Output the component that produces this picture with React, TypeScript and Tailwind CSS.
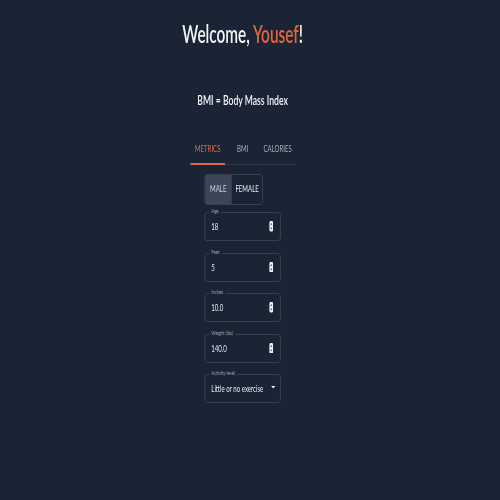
import React from "react";

const tabs = ["METRICS", "BMI", "CALORIES"];

function Spinner() {
  return (
    <svg viewBox="0 0 6 10" preserveAspectRatio="none" className="w-[6.4px] h-[10.5px] shrink-0">
      <rect x="0" y="0" width="6" height="10" rx="2" fill="#f1f1f1" />
      <path d="M1.6 3.6 L3 1.9 L4.4 3.6 Z" fill="#3a3a3a" />
      <path d="M1.6 6.4 L3 8.1 L4.4 6.4 Z" fill="#3a3a3a" />
    </svg>
  );
}

function Caret() {
  return (
    <svg viewBox="0 0 6 3" preserveAspectRatio="none" className="w-[6.2px] h-[2.6px] shrink-0 -mt-[2px]">
      <path d="M0 0 L6 0 L3 3 Z" fill="#f1f1f1" />
    </svg>
  );
}

function Field({ label, value, select }: { label: string; value: string; select?: boolean }) {
  return (
    <div
      className={
        select
          ? "relative h-[29px] w-full rounded-[4px] border-y border-x-[1.5px] border-[#3a4556] flex items-center pl-[9.4px] pr-[8px]"
          : "relative h-[29px] w-full rounded-[4px] border-y border-x-[1.5px] border-[#3a4556] flex items-center pl-[9.4px] pr-[10.5px]"
      }
    >
      <span className="absolute -top-[6px] left-[6px] px-[3.5px] bg-[#1a2435] text-[6.5px] leading-[8px] text-[#9aa4b1]">
        {label}
      </span>
      <span className="flex-1 pt-[2px] text-[9.5px] text-[#e8eaed]">{value}</span>
      {select ? <Caret /> : <Spinner />}
    </div>
  );
}

export default function App() {
  return (
    <div className="min-h-screen w-full overflow-hidden bg-[#1a2435] font-['Lato','Noto_Sans',sans-serif]">
      <div className="w-[757px] origin-top-left scale-x-[0.641] flex flex-col items-center pt-[22px]">
        {/* Header */}
        <h1 className="text-[24px] leading-[24px] font-semibold text-[#f3f4f6]">
          Welcome, <span className="text-[#e2663f]">Yousef</span>!
        </h1>
        <h2 className="mt-[47px] text-[13.5px] leading-[14px] font-semibold text-[#f3f4f6]">
          BMI = Body Mass Index
        </h2>

        {/* Tabs */}
        <div className="mt-[27px] flex h-[30.5px] border-b border-[#2c3748]">
          {tabs.map((t, i) => (
            <div key={t} className="w-[54.6px] flex flex-col">
              <div
                className={
                  i === 0
                    ? "flex-1 pt-[2px] flex items-center justify-center text-[9.5px] text-[#e0694a]"
                    : "flex-1 pt-[2px] flex items-center justify-center text-[9.5px] text-[#a8afba]"
                }
              >
                {t}
              </div>
              <div className={i === 0 ? "h-[1.6px] -mb-px bg-[#e0694a]" : "h-[1.6px] -mb-px"} />
            </div>
          ))}
        </div>

        {/* Form */}
        <div className="w-[118.6px] flex flex-col">
          <div className="mt-[9.5px] self-start flex h-[31px] rounded-[4px] border-y border-x-[1.5px] border-[#3a4556] overflow-hidden">
            <div className="w-[40.6px] bg-[#3c4658] flex items-center justify-center text-[9.5px] text-[#d3d7dd]">
              MALE
            </div>
            <div className="w-[48.4px] border-l-[1.5px] border-[#3a4556] flex items-center justify-center text-[9.5px] text-[#eceef1]">
              FEMALE
            </div>
          </div>

          <div className="mt-[7px] flex flex-col gap-[11.5px]">
            <Field label="Age" value="18" />
            <Field label="Feet" value="5" />
            <Field label="Inches" value="10.0" />
            <Field label="Weight (lbs)" value="140.0" />
            <Field label="Activity level" value="Little or no exercise" select />
          </div>
        </div>
      </div>
    </div>
  );
}
